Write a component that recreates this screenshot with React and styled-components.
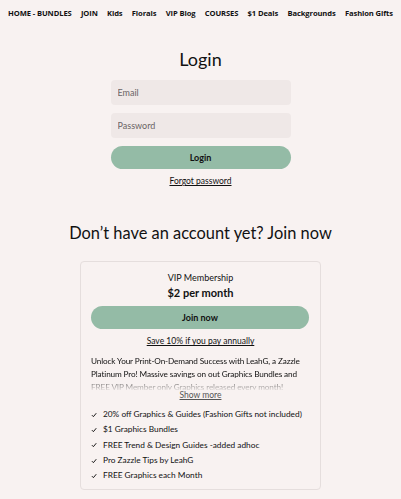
import React from 'react';
import styled, { createGlobalStyle } from 'styled-components';

const navItems = [
  'HOME - BUNDLES',
  'JOIN',
  'Kids',
  'Florals',
  'VIP Blog',
  'COURSES',
  '$1 Deals',
  'Backgrounds',
  'Fashion Gifts',
];

const perks = [
  '20% off Graphics & Guides (Fashion Gifts not included)',
  '$1 Graphics Bundles',
  'FREE Trend & Design Guides -added adhoc',
  'Pro Zazzle Tips by LeahG',
  'FREE Graphics each Month',
];

const GlobalStyle = createGlobalStyle`
  html, body {
    margin: 0;
    padding: 0;
    background: #f8f2f1;
  }
  body {
    font-family: Lato, "Open Sans", sans-serif;
    color: #111;
  }
  * {
    box-sizing: border-box;
  }
`;

const Page = styled.div`
  width: 401px;
  min-height: 499px;
  background: #f8f2f1;
`;

const Nav = styled.nav`
  display: flex;
  justify-content: space-between;
  align-items: center;
  height: 26px;
  padding: 0 8px 0 8px;
`;

const NavLink = styled.a`
  font-family: "Open Sans", sans-serif;
  font-size: 7.6px;
  font-weight: 700;
  color: #111;
  white-space: nowrap;
  text-decoration: none;
  letter-spacing: -0.1px;
`;

const Main = styled.main`
  display: flex;
  flex-direction: column;
  align-items: center;
`;

const Title = styled.h1`
  margin: 21px 0 0;
  font-size: 18px;
  font-weight: 400;
  line-height: 24px;
`;

const Form = styled.form`
  display: flex;
  flex-direction: column;
  width: 180px;
  margin-top: 9px;
`;

const Input = styled.input`
  height: 25px;
  margin-bottom: 8px;
  padding: 0 7px;
  border: none;
  border-radius: 4px;
  background: #efe8e7;
  font-family: Lato, sans-serif;
  font-size: 9px;
  outline: none;
  &::placeholder {
    color: #6a6464;
  }
`;

const Button = styled.button`
  height: 23px;
  border: none;
  border-radius: 12px;
  background: #94bba6;
  font-family: Lato, sans-serif;
  font-size: 9px;
  font-weight: 700;
  color: #111;
  width: ${({ $width }) => $width || '100%'};
`;

const Underlined = styled.a`
  position: relative;
  display: block;
  text-align: center;
  font-size: ${({ $size }) => $size || '8.5px'};
  line-height: 12px;
  color: ${({ $muted }) => ($muted ? '#555' : '#111')};
  text-decoration: underline;
  margin-top: ${({ $top }) => $top || '6px'};
`;

const JoinTitle = styled.h2`
  margin: 34px 0 0;
  font-size: 16.4px;
  font-weight: 400;
  line-height: 24px;
`;

const Card = styled.section`
  width: 241px;
  margin-top: 16px;
  padding: 9px 10px 6px 10px;
  border: 1px solid #e5dedd;
  border-radius: 4px;
  background: #f8f2f1;
  display: flex;
  flex-direction: column;
  align-items: center;
`;

const PlanName = styled.div`
  font-size: 9px;
  line-height: 13px;
`;

const Price = styled.div`
  margin-top: 1px;
  font-size: 11px;
  font-weight: 700;
  line-height: 15px;
`;

const CardButton = styled(Button)`
  margin-top: 6px;
  width: 218px;
  align-self: flex-start;
`;

const Blurb = styled.p`
  align-self: stretch;
  margin: 8px -2px 0 0;
  font-size: 8.2px;
  letter-spacing: -0.12px;
  line-height: 13px;
  height: 35px;
  overflow: hidden;
  -webkit-mask-image: linear-gradient(to bottom, #000 62%, rgba(0, 0, 0, 0.12) 100%);
  mask-image: linear-gradient(to bottom, #000 62%, rgba(0, 0, 0, 0.12) 100%);
`;

const Perks = styled.ul`
  align-self: stretch;
  list-style: none;
  margin: 6px 0 0;
  padding: 0;
`;

const Perk = styled.li`
  display: flex;
  align-items: center;
  gap: 6px;
  font-size: 8.3px;
  line-height: 15.3px;
  white-space: nowrap;
`;

const Check = () => (
  <svg width="6" height="6" viewBox="0 0 10 10" fill="none">
    <path d="M1.5 5.2 L4 7.8 L8.8 2" stroke="#111" strokeWidth="1.6" />
  </svg>
);

export default function App() {
  return (
    <Page>
      <GlobalStyle />
      <Nav>
        {navItems.map(item => (
          <NavLink key={item}>{item}</NavLink>
        ))}
      </Nav>
      <Main>
        <Title>Login</Title>
        <Form onSubmit={e => e.preventDefault()}>
          <Input placeholder="Email" />
          <Input placeholder="Password" type="password" />
          <Button type="submit">Login</Button>
          <Underlined $top="6px">Forgot password</Underlined>
        </Form>
        <JoinTitle>Don’t have an account yet? Join now</JoinTitle>
        <Card>
          <PlanName>VIP Membership</PlanName>
          <Price>$2 per month</Price>
          <CardButton>Join now</CardButton>
          <Underlined $top="6px">Save 10% if you pay annually</Underlined>
          <Blurb>
            Unlock Your Print-On-Demand Success with LeahG, a Zazzle
            Platinum Pro! Massive savings on out Graphics Bundles and
            FREE VIP Member only Graphics released every month!
          </Blurb>
          <Underlined $top="-1px" $muted>Show more</Underlined>
          <Perks>
            {perks.map(p => (
              <Perk key={p}>
                <Check />
                {p}
              </Perk>
            ))}
          </Perks>
        </Card>
      </Main>
    </Page>
  );
}
